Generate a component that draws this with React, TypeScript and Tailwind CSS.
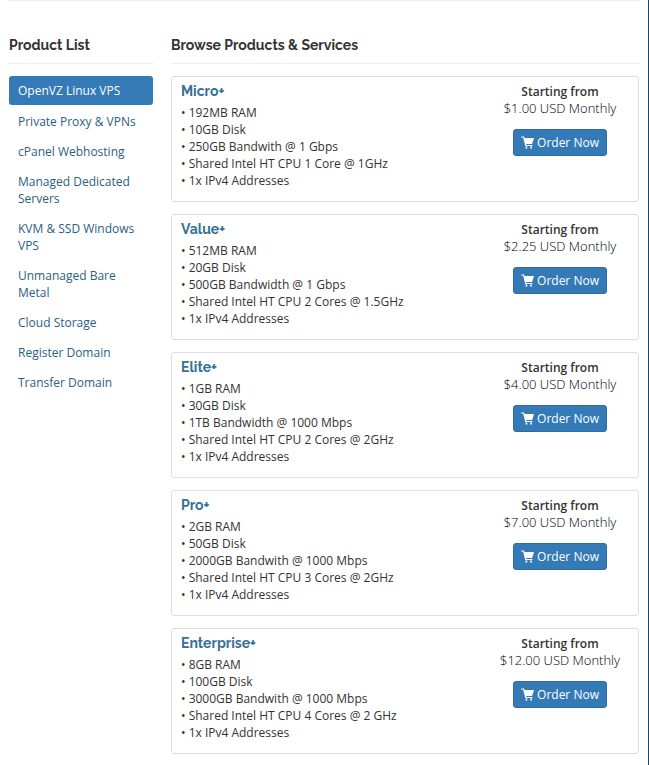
const categories = [
    "OpenVZ Linux VPS",
    "Private Proxy & VPNs",
    "cPanel Webhosting",
    "Managed Dedicated Servers",
    "KVM & SSD Windows VPS",
    "Unmanaged Bare Metal",
    "Cloud Storage",
    "Register Domain",
    "Transfer Domain",
];

const products = [
    {
        name: "Micro+",
        price: "$1.00 USD",
        specs: ["192MB RAM", "10GB Disk", "250GB Bandwith @ 1 Gbps", "Shared Intel HT CPU 1 Core @ 1GHz", "1x IPv4 Addresses"],
    },
    {
        name: "Value+",
        price: "$2.25 USD",
        specs: ["512MB RAM", "20GB Disk", "500GB Bandwidth @ 1 Gbps", "Shared Intel HT CPU 2 Cores @ 1.5GHz", "1x IPv4 Addresses"],
    },
    {
        name: "Elite+",
        price: "$4.00 USD",
        specs: ["1GB RAM", "30GB Disk", "1TB Bandwidth @ 1000 Mbps", "Shared Intel HT CPU 2 Cores @ 2GHz", "1x IPv4 Addresses"],
    },
    {
        name: "Pro+",
        price: "$7.00 USD",
        specs: ["2GB RAM", "50GB Disk", "2000GB Bandwith @ 1000 Mbps", "Shared Intel HT CPU 3 Cores @ 2GHz", "1x IPv4 Addresses"],
    },
    {
        name: "Enterprise+",
        price: "$12.00 USD",
        specs: ["8GB RAM", "100GB Disk", "3000GB Bandwith @ 1000 Mbps", "Shared Intel HT CPU 4 Cores @ 2 GHz", "1x IPv4 Addresses"],
    },
];

const CartIcon = () => (
    <svg className="w-[13px] h-[13px]" viewBox="0 0 13 13" fill="currentColor" aria-hidden="true">
        <path d="M0.5 0.4h2.2c.3 0 .5.2.6.5l.3 1.1h8.9c.3 0 .5.3.4.6l-1.6 4.9c-.1.3-.3.4-.6.4H5.1l.2 1.1h5.8c.7 0 .7 1.1 0 1.1H4.8c-.3 0-.5-.2-.6-.4L2.1 1.6H.5C-.1 1.6-.1.4.5.4z" />
        <path d="M4.5 10.6h1.8v1.8H4.5zM9.2 10.6H11v1.8H9.2z" />
    </svg>
);

const ProductCard = ({ product }: { product: (typeof products)[number] }) => (
    <article className="flex justify-between rounded-[3px] border border-[#ddd] px-[9px] pt-[5px] pb-3">
        <div>
            <h3 className="font-['Raleway','Lato',sans-serif] text-[14px] leading-[18px] font-bold text-[#357095] mb-1">{product.name}</h3>
            <ul>
                {product.specs.map((s) => (
                    <li key={s}>• {s}</li>
                ))}
            </ul>
        </div>
        <div className="w-[138px] pt-[1px] text-center">
            <p className="font-semibold">Starting from</p>
            <p className="text-[13px] font-light text-black">{product.price} Monthly</p>
            <button className="mt-3 inline-flex items-center gap-[3px] rounded-[3px] border border-[#2e6da4] bg-[#337ab7] px-[7px] py-1 font-medium text-white">
                <CartIcon />
                Order Now
            </button>
        </div>
    </article>
);

export default function App() {
    return (
        <div className="min-h-screen border-r border-[#1b4568] bg-white pb-3 font-['Open_Sans',sans-serif] text-[12px] leading-[17px] text-[#333]">
            <hr className="mx-[9px] border-[#eee]" />
            <div className="flex pt-[34px]">
                <aside className="w-1/4 px-[9px]">
                    <h2 className="font-['Raleway','Lato',sans-serif] text-[14px] leading-5 font-bold border-b border-[#eee] pb-2 mb-3">Product List</h2>
                    <nav className="flex flex-col gap-px">
                        {categories.map((c, i) => (
                            <a
                                key={c}
                                href="#"
                                className={i === 0 ? "rounded-[3px] bg-[#337ab7] px-[9px] py-[6px] mb-px text-white" : "px-[9px] py-[6px] text-[#2a6084]"}
                            >
                                {c}
                            </a>
                        ))}
                    </nav>
                </aside>
                <main className="w-3/4 px-[9px]">
                    <h2 className="font-['Raleway','Lato',sans-serif] text-[14px] leading-5 font-bold border-b border-[#eee] pb-2 mb-3">Browse Products &amp; Services</h2>
                    <div className="flex flex-col gap-3">
                        {products.map((p) => (
                            <ProductCard key={p.name} product={p} />
                        ))}
                    </div>
                </main>
            </div>
        </div>
    );
}
